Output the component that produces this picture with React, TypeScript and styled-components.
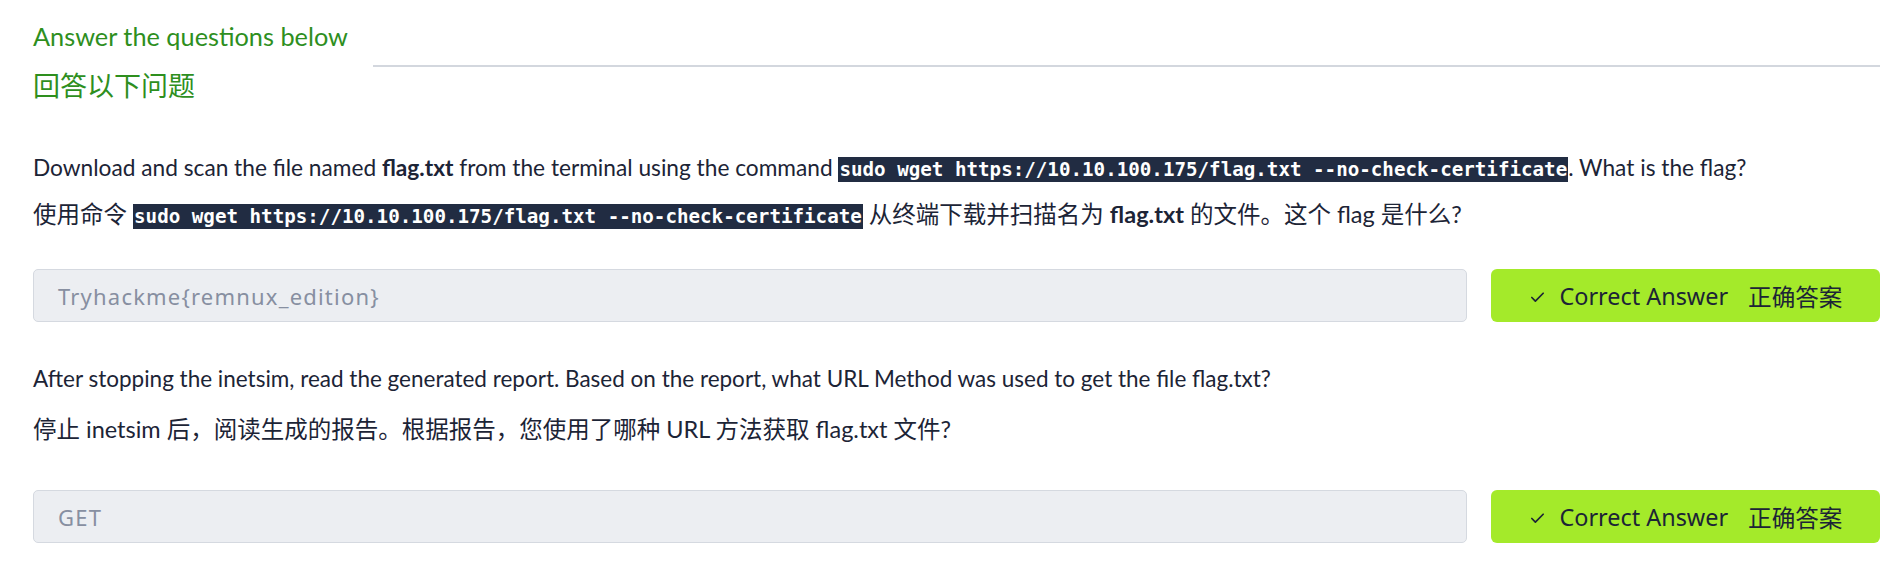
import React from "react";
import styled, { createGlobalStyle } from "styled-components";
import { Check } from "lucide-react";

const Global = createGlobalStyle`
  html, body { margin: 0; padding: 0; background: #ffffff; }
  body { font-family: Lato, "Noto Sans CJK SC", sans-serif; }
`;

const Page = styled.div`
  padding: 12px 16px 0 33px;
  color: #1c2436;
`;

const Header = styled.div`
  display: flex;
  align-items: flex-start;
`;

const HeadingBlock = styled.div`
  display: flex;
  flex-direction: column;
`;

const Heading = styled.div<{ $size: number }>`
  font-family: Lato, "Noto Sans CJK SC", sans-serif;
  font-size: ${(p) => p.$size}px;
  height: 49px;
  line-height: 49px;
  color: #2e8f1e;
  white-space: nowrap;
`;

const Rule = styled.div`
  flex: 1;
  height: 2px;
  background: #d3d7de;
  margin: 53px 0 0 25px;
`;

const Para = styled.p<{ $mt?: number; $size?: number }>`
  margin: ${(p) => p.$mt ?? 0}px 0 0;
  height: 47px;
  font-family: Lato, "Noto Sans CJK SC", sans-serif;
  font-size: ${(p) => p.$size ?? 22.7}px;
  line-height: 47px;
  color: #1c2436;
  white-space: nowrap;
`;

const Bold = styled.b`
  font-weight: 700;
`;

const Code = styled.code`
  font-family: "DejaVu Sans Mono", monospace;
  font-weight: 700;
  font-size: 19.2px;
  line-height: 1;
  background: #212c42;
  color: #ffffff;
  padding: 1px 1px;
`;

const AnswerRow = styled.div<{ $mt: number }>`
  display: flex;
  gap: 24px;
  margin-top: ${(p) => p.$mt}px;
  height: 53px;
`;

const AnswerField = styled.div`
  flex: 1;
  display: flex;
  align-items: center;
  box-sizing: border-box;
  padding-left: 24px;
  background: #eceef2;
  border: 1px solid #d5d9e0;
  border-radius: 5px;
  font-family: "Noto Sans", sans-serif;
  font-size: 22px;
  letter-spacing: 1.2px;
  color: #878fa1;
`;

const CorrectButton = styled.button`
  width: 389px;
  display: flex;
  align-items: center;
  justify-content: center;
  border: none;
  border-radius: 6px;
  background: #a4ea2a;
  color: #1c2436;
  font-family: "Noto Sans", "Noto Sans CJK SC", sans-serif;
  font-size: 23.4px;
  padding: 0;
  cursor: pointer;
`;

const CheckWrap = styled.span`
  display: inline-flex;
  margin: 3px 14px 0 0;
`;

const Cn = styled.span`
  margin-left: 20px;
  font-family: "Noto Sans CJK SC", sans-serif;
  font-size: 23.6px;
`;

function Answer({ value, mt }: { value: string; mt: number }) {
  return (
    <AnswerRow $mt={mt}>
      <AnswerField>{value}</AnswerField>
      <CorrectButton>
        <CheckWrap>
          <Check size={17} strokeWidth={2.4} />
        </CheckWrap>
        Correct Answer
        <Cn>正确答案</Cn>
      </CorrectButton>
    </AnswerRow>
  );
}

const cmd = "sudo wget https://10.10.100.175/flag.txt --no-check-certificate";

export default function App() {
  return (
    <>
      <Global />
      <Page>
        <Header>
          <HeadingBlock>
            <Heading $size={25.3}>Answer the questions below</Heading>
            <Heading $size={27}>回答以下问题</Heading>
          </HeadingBlock>
          <Rule />
        </Header>
        <Para $mt={34}>
          Download and scan the file named <Bold>flag.txt</Bold> from the terminal using the command{" "}
          <Code>{cmd}</Code>. What is the flag?
        </Para>
        <Para $size={23.5}>
          使用命令 <Code>{cmd}</Code> 从终端下载并扫描名为 <Bold>flag.txt</Bold> 的文件。这个 flag 是什么?
        </Para>
        <Answer value="Tryhackme{remnux_edition}" mt={31} />
        <Para $mt={33} $size={22.5}>
          After stopping the inetsim, read the generated report. Based on the report, what URL Method was used to get the file flag.txt?
        </Para>
        <Para $mt={4} $size={23.5}>
          停止 inetsim 后，阅读生成的报告。根据报告，您使用了哪种 URL 方法获取 flag.txt 文件?
        </Para>
        <Answer value="GET" mt={37} />
      </Page>
    </>
  );
}
